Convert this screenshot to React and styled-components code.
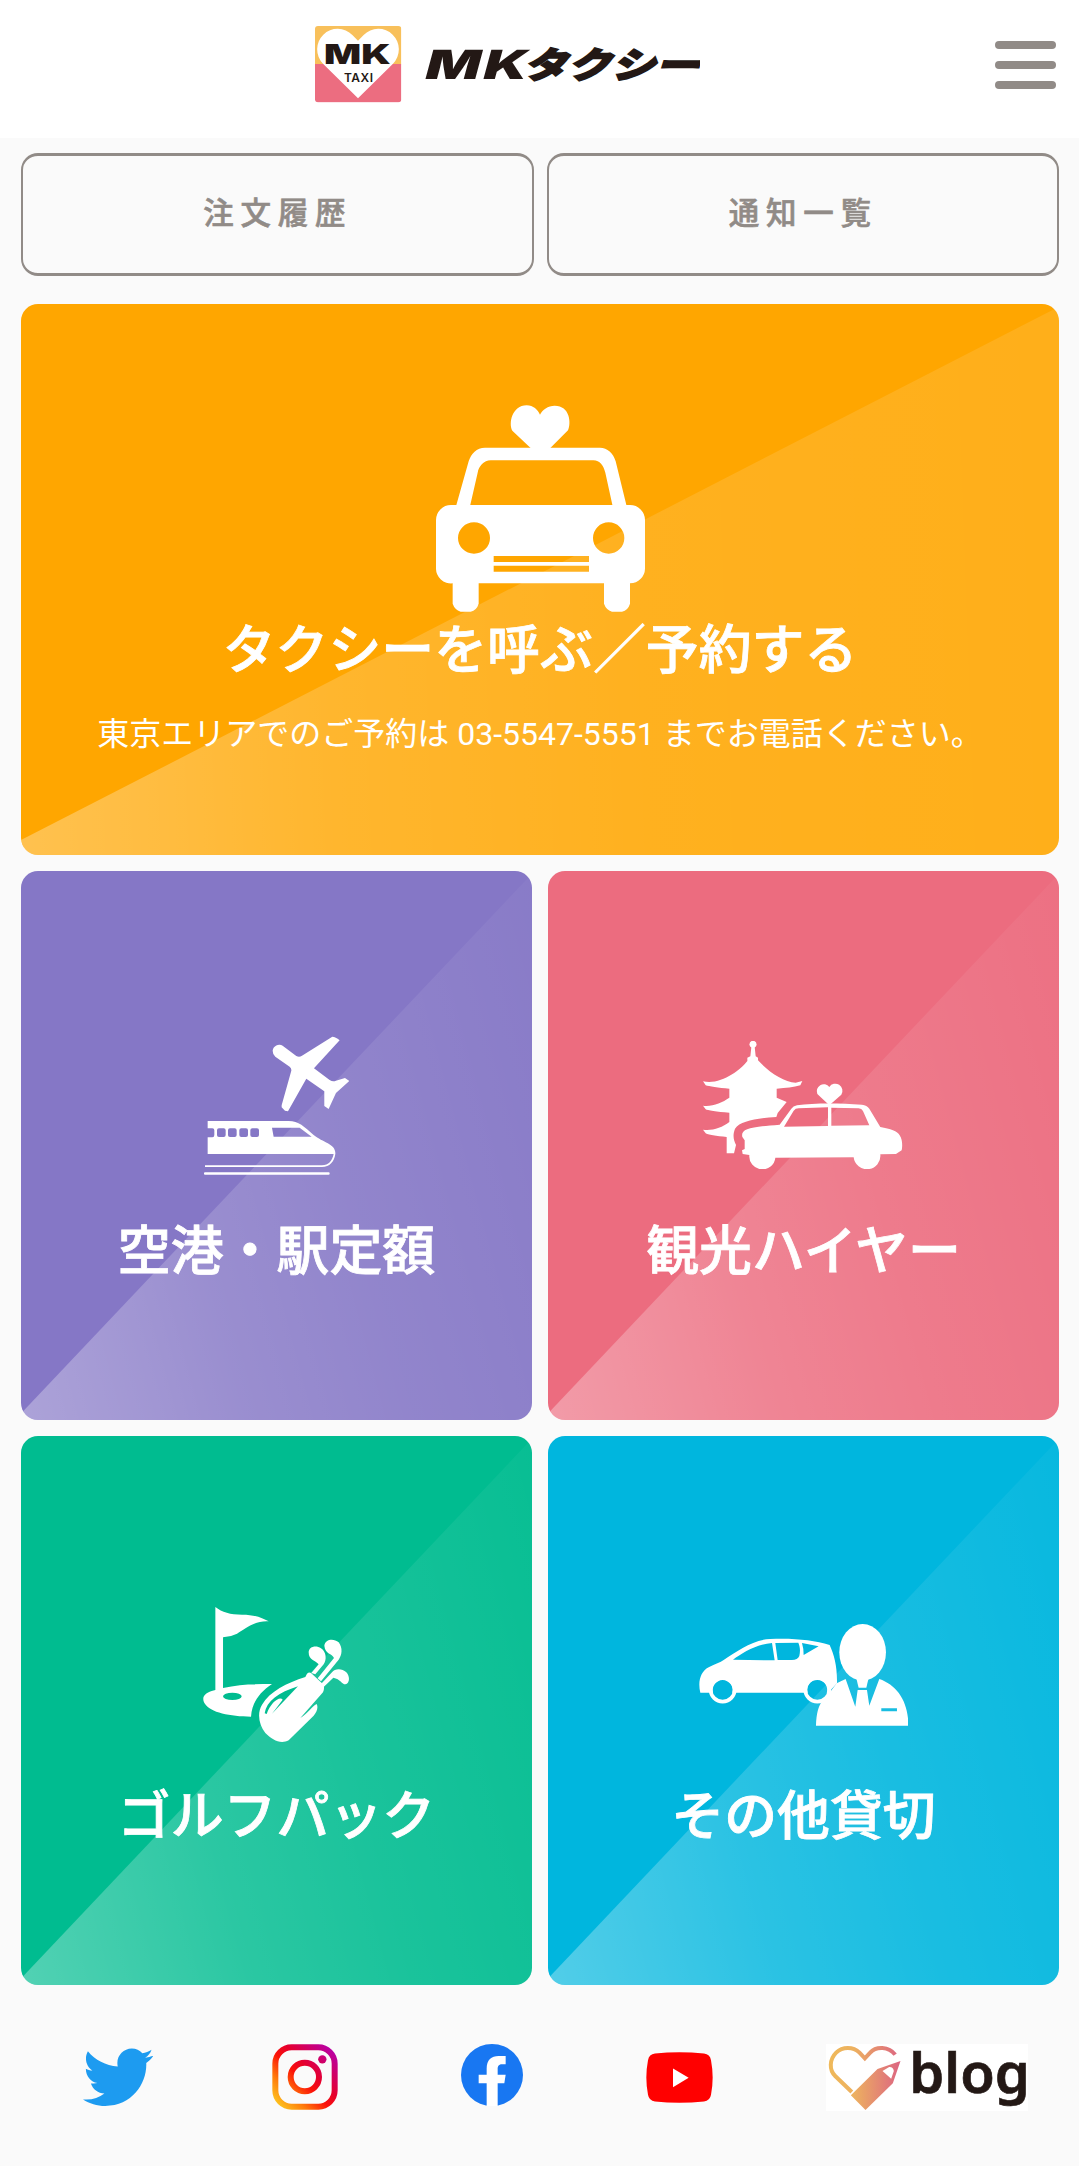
import React from "react";
import styled, { createGlobalStyle } from "styled-components";
import { FaTwitter } from "react-icons/fa";

const GlobalStyle = createGlobalStyle`
    * {
        box-sizing: border-box;
    }

    body {
        margin: 0;
        background: #fafafa;
        font-family: Roboto, "Noto Sans CJK JP", sans-serif;
    }
`;

const Page = styled.div`
    width: 1079px;
    min-height: 2166px;
    background: #fafafa;
`;

const Header = styled.header`
    display: grid;
    grid-template-columns: 1fr auto 1fr;
    height: 138px;
    padding: 25px 23px 0 0;
    background: #fff;
`;

const Logo = styled.svg`
    grid-column: 2;
    display: block;
    width: 385px;
    height: 78px;
    margin: 1px 41px 0 0;
`;

const MenuButton = styled.button`
    display: flex;
    flex-direction: column;
    justify-self: end;
    gap: 11.5px;
    width: 61px;
    padding: 16px 0 0;
    border: 0;
    background: none;
`;

const MenuBar = styled.span`
    height: 8.3px;
    border-radius: 4px;
    background: #918b87;
`;

const Main = styled.main`
    padding: 15px 20px 0 21px;
`;

const TopLinks = styled.nav`
    display: grid;
    grid-template-columns: 1fr 1fr;
    gap: 13px;
    margin-bottom: 28px;
`;

const TopLink = styled.a`
    display: flex;
    align-items: center;
    justify-content: center;
    height: 123px;
    padding: 0 0 7px 1px;
    border: solid #918b87;
    border-width: 3px 2px;
    border-radius: 17px;
    color: #918b87;
    font-family: "Noto Sans CJK JP", sans-serif;
    font-size: 30.5px;
    font-weight: 500;
    letter-spacing: 6.8px;
    -webkit-text-stroke: 0.6px currentColor;
`;

const Tile = styled.a`
    position: relative;
    z-index: 0;
    display: flex;
    flex-direction: column;
    align-items: center;
    overflow: hidden;
    border-radius: 17px;
    background: ${({ $color }) => $color};
    color: #fff;

    /* diagonal sheen */
    &::before {
        content: "";
        position: absolute;
        inset: 0;
        z-index: -1;
        background: linear-gradient(
            75deg,
            rgba(255, 255, 255, 0.32),
            rgba(255, 255, 255, 0.17) 35%,
            rgba(255, 255, 255, 0.1) 60%,
            rgba(255, 255, 255, 0.03)
        );
        clip-path: polygon(0 98.8%, 100% 0.5%, 100% 100%, 0 100%);
    }
`;

const HeroTile = styled(Tile)`
    height: 551px;
    margin-bottom: 16px;
    padding-top: 101px;

    &::before {
        background: linear-gradient(
            88deg,
            rgba(255, 255, 255, 0.31),
            rgba(255, 255, 255, 0.18) 30%,
            rgba(255, 255, 255, 0.12) 60%,
            rgba(255, 255, 255, 0.1)
        );
        clip-path: polygon(0 97.3%, 100% 0.5%, 100% 100%, 0 100%);
    }
`;

const TileGrid = styled.div`
    display: grid;
    grid-template-columns: 1fr 1fr;
    gap: 16px;
`;

const ServiceTile = styled(Tile)`
    height: 549px;
`;

const TileIcon = styled.svg`
    display: block;
    width: ${({ $width }) => $width}px;
    height: ${({ $height }) => $height}px;
    fill: #fff;
    fill-rule: evenodd;
`;

const IconArea = styled.div`
    height: 341px;
    padding-top: ${({ $top }) => $top}px;
`;

const TileTitle = styled.h2`
    margin: 0;
    font-family: "Noto Sans CJK JP", sans-serif;
    font-size: 52.9px;
    font-weight: 500;
    line-height: 70px;
    white-space: nowrap;
    -webkit-text-stroke: 0.8px currentColor;
`;

const HeroTitle = styled(TileTitle)`
    margin-top: -1px;
`;

const HeroNote = styled.p`
    margin: 29px 0 0;
    font-size: 32px;
    line-height: 48px;
    white-space: nowrap;
`;

const Footer = styled.footer`
    display: grid;
    grid-template-columns: repeat(4, 187px) 308px;
    align-items: center;
    justify-items: center;
    padding: 57px 0 0 24.5px;

    svg {
        display: block;
    }
`;

const TwitterIcon = styled(FaTwitter)`
    width: 70.5px;
    height: 70.5px;
    color: #1d9bf0;
`;

const FacebookIcon = styled.svg`
    margin-bottom: 4px;
`;

const BlogBanner = styled.svg`
    overflow: visible;
    background: #fff;
`;

const MkLogo = () => (
    <Logo viewBox="75 77 1155 234" role="img" aria-label="MKタクシー">
        <clipPath id="badge">
            <rect x="75" y="77" width="259" height="229" rx="9" />
        </clipPath>
        <g clipPath="url(#badge)">
            <rect x="75" y="77" width="259" height="115" fill="#f8c05b" />
            <rect x="75" y="191" width="259" height="116" fill="#ec6d80" />
        </g>
        <path
            fill="#fff"
            d="M204 294 99 190A61.5 61.5 0 0 1 187 104L204 121 221 104A61.5 61.5 0 0 1 309 190Z"
        />
        <g fill="#231815" fontFamily="Inter, sans-serif">
            <text
                x="102"
                y="192"
                fontSize="81"
                fontWeight="900"
                textLength="200"
                lengthAdjust="spacingAndGlyphs"
            >
                MK
            </text>
            <text x="162" y="245" fontSize="36" fontWeight="600" textLength="87">
                TAXI
            </text>
            <text
                transform="translate(398 237) skewX(-15)"
                fontSize="121"
                fontWeight="900"
                letterSpacing="6"
                textLength="314"
                lengthAdjust="spacingAndGlyphs"
            >
                MK
            </text>
            <text
                transform="translate(700 233) skewX(-17)"
                fontFamily="'Noto Sans CJK JP', sans-serif"
                fontSize="107"
                fontWeight="900"
                stroke="#231815"
                strokeWidth="5"
                textLength="528"
                lengthAdjust="spacingAndGlyphs"
            >
                タクシー
            </text>
        </g>
    </Logo>
);

const FrontTaxi = () => (
    <TileIcon $width={209} $height={207} viewBox="48 44 627 621">
        <path d="M335 176 277 121C265 100 276 45 320 45 340 45 353 58 360 73 367 58 384 46 404 46 450 46 454 98 444 120L388 176Z" />
        <path d="M108 348 146 213C153 190 170 172 195 172H540C562 172 580 188 587 213L620 348H578L556 247C550 225 540 210 520 210H212C192 210 176 228 173 247L150 348Z" />
        <path d="M93 344H630A45 45 0 0 1 675 389V533A45 45 0 0 1 630 579V640Q624 660 606 664H576Q558 658 552 640V579H176V640Q170 660 152 664H122Q104 658 98 640V579A45 45 0 0 1 48 533V389A45 45 0 0 1 93 344ZM114 443A48 47 0 1 0 210 443A48 47 0 1 0 114 443ZM519 443A47 47 0 1 0 613 443A47 47 0 1 0 519 443ZM221 497H507V515H221ZM221 526H507V544H221Z" />
    </TileIcon>
);

const TrainAndPlane = () => (
    <TileIcon $width={145.3} $height={139.3} viewBox="41 48 436 418">
        <path d="M247 92A20 20 0 0 1 277 77L318 108Q327 113 335 107L426 50Q436 50 448 61L371 145 418 180Q428 187 437 182L464 174 477 183 437 219 415 267 402 258V214L348 176 293 274 284 272 274 262V256L303 152Q304 145 298 140L255 110Q247 103 247 92Z" />
        <path d="M52 303H295C325 303 342 320 370 345 398 368 438 372 435 402 432 425 418 441 395 441H44V436H395C415 436 426 422 430 402H52V352H66Q72 352 72 345V331Q72 325 66 325H52ZM245 323 250 350H364L328 323ZM86 325Q80 325 80 331V345Q80 351 86 351H100Q106 351 106 345V331Q106 325 100 325ZM119 325Q113 325 113 331V345Q113 351 119 351H133Q139 351 139 345V331Q139 325 133 325ZM153 325Q147 325 147 331V345Q147 351 153 351H167Q173 351 173 345V331Q173 325 167 325ZM186 325Q180 325 180 331V345Q180 351 186 351H200Q206 351 206 345V331Q206 325 200 325Z" />
        <rect x="41" y="457" width="377" height="7" rx="3" />
    </TileIcon>
);

const PagodaAndTaxi = () => (
    <TileIcon $width={201} $height={128.3} viewBox="38 62 603 385">
        <circle cx="188" cy="72" r="10.5" />
        <path d="M183 80H193L196 108 203 112V120C235 155 280 185 316 187L336 182 330 195Q300 203 259 205V232L289 245 262 278 258 290C200 294 150 302 134 325 126 345 130 360 137 374L131 399H109V350C80 348 50 342 46 339L38 328C65 332 95 322 117 305V277C80 275 50 270 46 267L38 256C65 260 95 247 117 232V205C85 203 55 198 46 195L38 183C90 195 150 150 171 122V112L180 108Z" />
        <path d="M156 350C150 325 180 320 268 313L303 265Q308 257 320 255C370 248 440 248 515 253Q530 255 537 265L570 320C600 325 622 332 628 345 638 360 636 380 634 390L617 401 570 402A40 40 0 0 1 490 411L255 412A39 39 0 0 1 177 404L157 401 155 390 163 386V360ZM281 319 413 317V261L325 264Q315 264 310 271ZM423 316 537 315 518 272Q514 265 505 264L423 262Z" />
        <path d="M417 255 381 221A21 21 0 0 1 417 200 21 21 0 0 1 453 223Z" />
    </TileIcon>
);

const GolfIcon = () => (
    <TileIcon $width={146.7} $height={135.3} viewBox="38 52 440 406">
        <path d="M75 52C95 68 120 75 155 75 195 75 215 85 235 95 190 92 160 122 140 132Q120 142 98 143V295C150 283 200 283 245 283 205 310 185 340 182 381 120 380 60 370 42 340 32 320 45 308 75 301ZM98 320A28 11 0 1 0 154 320A28 11 0 1 0 98 320Z" />
        <path d="M355 188C355 170 378 165 392 176 409 187 409 212 400 224L375 254 363 250 385 224C375 212 355 212 355 188Z" />
        <path d="M402 168C405 148 430 145 445 158 458 175 455 197 445 210L392 275 382 266 431 205C425 190 405 195 402 168Z" />
        <path d="M425 248C433 236 455 235 468 248 480 262 478 280 465 284 455 284 450 268 429 264L400 292 392 283Z" />
        <path d="M350 252Q356 247 362 250L400 285Q403 298 398 308L330 385C352 372 365 350 379 343 385 355 378 368 370 378L295 452C270 465 245 450 225 430 205 405 200 370 215 345 238 305 290 280 345 262ZM223 371C228 335 265 308 323 290L245 372 277 330C268 318 240 340 229 373Z" />
    </TileIcon>
);

const CarAndDriver = () => (
    <TileIcon $width={209.3} $height={101.7} viewBox="26 42 628 305">
        <path d="M30 248C22 215 30 185 55 172 75 162 90 157 100 150 140 123 190 88 240 87 310 84 370 90 418 105 432 135 441 170 440 220L412 250H409A30 30 0 1 0 352 248H126A30 30 0 1 0 68 248ZM128 149 253 151 245 99C195 103 155 130 128 149ZM255 99 262 150H305Q322 150 327 138C330 125 330 112 324 98ZM335 99Q340 115 340 135L385 109Z" />
        <circle cx="97" cy="239" r="36" fill="none" stroke="#fff" strokeWidth="11" />
        <circle cx="381" cy="239" r="36" fill="none" stroke="#fff" strokeWidth="11" />
        <ellipse cx="517" cy="127" rx="70" ry="85" />
        <path d="M498 205 505 233H528L535 205Z" />
        <path d="M377 347C378 310 385 290 392 278L413 255 439 220 466 207 495 290 502 240H530L537 287 567 207C620 225 655 275 654 347ZM573 295V304H620V295Z" />
    </TileIcon>
);

const Instagram = () => (
    <svg width="66" height="66" viewBox="638 73 198 198">
        <linearGradient
            id="instagram"
            gradientUnits="userSpaceOnUse"
            x1="645"
            y1="262"
            x2="828"
            y2="82"
        >
            <stop offset="0.05" stopColor="#fdc21e" />
            <stop offset="0.25" stopColor="#ff7a0a" />
            <stop offset="0.45" stopColor="#fb1208" />
            <stop offset="0.6" stopColor="#e6002d" />
            <stop offset="0.95" stopColor="#b900a4" />
        </linearGradient>
        <g fill="none" stroke="url(#instagram)" strokeWidth="18">
            <rect x="648" y="83" width="178" height="178" rx="49" />
            <circle cx="736.5" cy="172" r="42.5" />
        </g>
        <circle cx="789" cy="119" r="12.5" fill="url(#instagram)" />
    </svg>
);

const Facebook = () => (
    <FacebookIcon width="62" height="62" viewBox="1204 72 186 186">
        <circle cx="1297" cy="165" r="93" fill="#1877f2" />
        <path
            fill="#fff"
            d="M1281 258V190H1257V164H1281V146C1281 120 1295 108 1317 108H1338V133H1327C1316 133 1314 140 1314 148V164H1338L1334 190H1314V258Z"
        />
    </FacebookIcon>
);

const YouTube = () => (
    <svg width="67" height="51" viewBox="138 96 201 152">
        <path
            fill="#f00"
            d="M165 100Q238 92 312 100 330 102 333 120 343 172 333 224 330 242 312 244 238 252 165 244 147 242 144 224 134 172 144 120 147 102 165 100Z"
        />
        <path fill="#fff" d="M219 145 266 173 219 201Z" />
    </svg>
);

const Blog = () => (
    <BlogBanner width="202" height="67" viewBox="679 72 605 201">
        <linearGradient
            id="blog"
            gradientUnits="userSpaceOnUse"
            x1="687"
            y1="0"
            x2="902"
            y2="0"
        >
            <stop offset="0" stopColor="#efb95a" />
            <stop offset="0.35" stopColor="#edb160" />
            <stop offset="1" stopColor="#dc6482" />
        </linearGradient>
        <path
            fill="none"
            stroke="url(#blog)"
            strokeWidth="12"
            d="M886 104C867 78 828 78 811 98L795 115 779 98C760 79 728 79 709 98 688 119 688 150 706 168L756 216"
        />
        <path
            fill="url(#blog)"
            fillRule="evenodd"
            d="M753 226 833 147 902 123 879 190 797 270ZM848 153 868 141Q880 140 882 153L874 176Z"
        />
        <text
            x="928"
            y="219"
            fill="#231815"
            fontFamily="'Noto Sans', sans-serif"
            fontSize="166"
            fontWeight="600"
            stroke="#231815"
            strokeWidth="2"
            textLength="362"
            lengthAdjust="spacingAndGlyphs"
        >
            blog
        </text>
    </BlogBanner>
);

const services = [
    { title: "空港・駅定額", color: "#8577c6", Icon: TrainAndPlane, top: 165 },
    { title: "観光ハイヤー", color: "#ec6c7f", Icon: PagodaAndTaxi, top: 170 },
    { title: "ゴルフパック", color: "#00bc90", Icon: GolfIcon, top: 171 },
    { title: "その他貸切", color: "#00b6de", Icon: CarAndDriver, top: 188 },
];

const App = () => {
    return (
        <Page>
            <GlobalStyle />
            <Header>
                <MkLogo />
                <MenuButton aria-label="メニュー">
                    <MenuBar />
                    <MenuBar />
                    <MenuBar />
                </MenuButton>
            </Header>
            <Main>
                <TopLinks>
                    <TopLink>注文履歴</TopLink>
                    <TopLink>通知一覧</TopLink>
                </TopLinks>
                <HeroTile $color="#ffa600">
                    <FrontTaxi />
                    <HeroTitle>タクシーを呼ぶ／予約する</HeroTitle>
                    <HeroNote>
                        東京エリアでのご予約は 03-5547-5551
                        までお電話ください。
                    </HeroNote>
                </HeroTile>
                <TileGrid>
                    {services.map(({ title, color, Icon, top }) => (
                        <ServiceTile key={title} $color={color}>
                            <IconArea $top={top}>
                                <Icon />
                            </IconArea>
                            <TileTitle>{title}</TileTitle>
                        </ServiceTile>
                    ))}
                </TileGrid>
            </Main>
            <Footer>
                <TwitterIcon />
                <Instagram />
                <Facebook />
                <YouTube />
                <Blog />
            </Footer>
        </Page>
    );
};

export default App;
